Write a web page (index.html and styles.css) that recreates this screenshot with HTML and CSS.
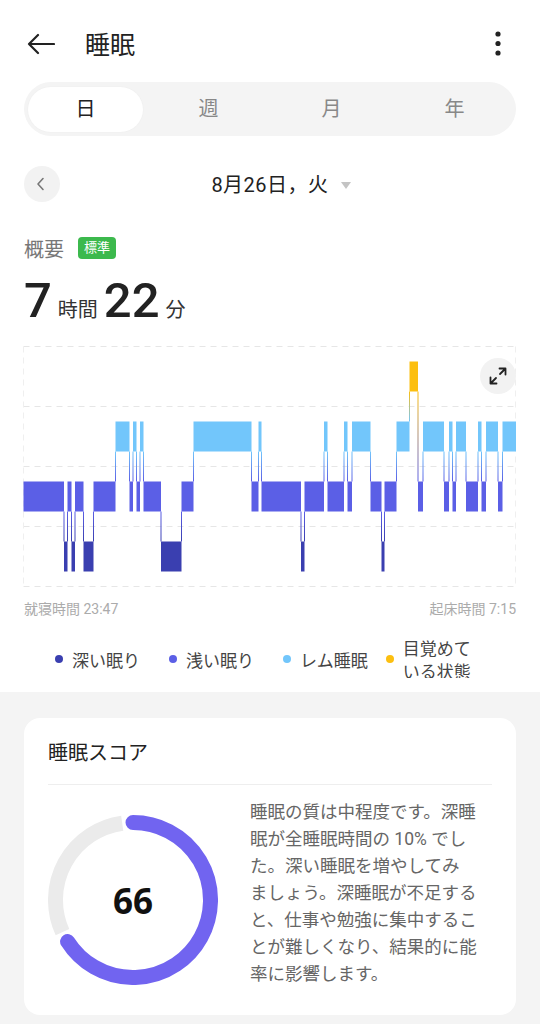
FILE: index.html
```html
<!DOCTYPE html>
<html lang="ja">
<head>
    <meta charset="UTF-8">
    <meta name="viewport" content="width=device-width, initial-scale=1.0">
    <title>睡眠</title>
    <link rel="stylesheet" href="styles.css">
</head>
<body>
    <header class="topbar">
        <svg class="back" width="28" height="24" viewBox="0 0 28 24">
            <path d="M2 12H27M2 12L11 3M2 12L11 21" fill="none" stroke="#222" stroke-width="2.2" stroke-linecap="round" stroke-linejoin="round"/>
        </svg>
        <h1>睡眠</h1>
        <svg class="more" width="6" height="26" viewBox="0 0 6 26">
            <circle cx="3" cy="3" r="2.6" fill="#222"/>
            <circle cx="3" cy="12.5" r="2.6" fill="#222"/>
            <circle cx="3" cy="22" r="2.6" fill="#222"/>
        </svg>
    </header>

    <nav class="tabs">
        <span class="tab active">日</span>
        <span class="tab">週</span>
        <span class="tab">月</span>
        <span class="tab">年</span>
    </nav>

    <section class="summary">
        <div class="date-row">
            <button class="prev" type="button">
                <svg width="10" height="14" viewBox="0 0 10 14">
                    <path d="M7 1.5L2 7l5 5.5" fill="none" stroke="#777" stroke-width="1.6" stroke-linecap="round" stroke-linejoin="round"/>
                </svg>
            </button>
            <span class="date">8月26日，火</span>
        </div>

        <div class="overview">
            <span class="overview-label">概要</span>
            <span class="badge">標準</span>
        </div>

        <div class="duration">
            <span class="num">7</span><span class="unit">時間</span><span class="num">22</span><span class="unit">分</span>
        </div>

        <div class="chart">
            <svg id="hypnogram" width="493" height="241" viewBox="23 345.5 493 241"></svg>
            <button class="expand" type="button">
                <svg width="36" height="36" viewBox="0 0 36 36">
                    <path d="M10.5 19.5v6h6M10.5 25.5l5.5-5.5M25.5 16.5v-6h-6M25.5 10.5L20 16" fill="none" stroke="#222" stroke-width="1.8" stroke-linecap="round" stroke-linejoin="round"/>
                </svg>
            </button>
        </div>

        <div class="times">
            <span>就寝時間 23:47</span>
            <span>起床時間 7:15</span>
        </div>

        <ul class="legend">
            <li><i class="dot deep"></i>深い眠り</li>
            <li><i class="dot light"></i>浅い眠り</li>
            <li><i class="dot rem"></i>レム睡眠</li>
            <li class="awake-item"><i class="dot awake"></i><span class="wrap">目覚めている状態</span></li>
        </ul>
    </section>

    <section class="score-section">
        <div class="card">
            <h2 class="card-title">睡眠スコア</h2>
            <div class="card-body">
                <div class="donut">
                    <svg width="170" height="170" viewBox="0 0 170 170">
                        <path d="M14.47 117.14A77.5 77.5 0 0 1 74.21 8.25" fill="none" stroke="#ebebeb" stroke-width="15"/>
                        <path d="M85 7.5A77.5 77.5 0 1 1 19.57 126.53" fill="none" stroke="#7164f0" stroke-width="15" stroke-linecap="round"/>
                    </svg>
                    <span class="score">66</span>
                </div>
                <p class="score-text">睡眠の質は中程度です。深睡<br>眠が全睡眠時間の 10% でし<br>た。深い睡眠を増やしてみ<br>ましょう。深睡眠が不足する<br>と、仕事や勉強に集中するこ<br>とが難しくなり、結果的に能<br>率に影響します。</p>
            </div>
        </div>
    </section>

    <script>
        // stage rows: 0 awake, 1 rem, 2 light, 3 deep
        var colors = ["#fcbf10", "#72c6fb", "#5b5fe6", "#3a3fb0"];
        var segments = [
            [2, 23.5, 64], [3, 64, 67.5], [2, 67.5, 71.5], [3, 71.5, 75], [2, 75, 83.5],
            [3, 83.5, 93.5], [2, 93.5, 115.5], [1, 115.5, 129.5], [2, 129.5, 133], [1, 133, 136.5],
            [2, 136.5, 140], [1, 140, 143.5], [2, 143.5, 161], [3, 161, 181.5], [2, 181.5, 193.5],
            [1, 193.5, 251.5], [2, 251.5, 258.5], [1, 258.5, 261.5], [2, 261.5, 301], [3, 301, 304.5],
            [2, 304.5, 324], [1, 324, 327.5], [2, 327.5, 344], [1, 344, 347.5], [2, 347.5, 352],
            [1, 352, 370.5], [2, 370.5, 381.5], [3, 381.5, 384.5], [2, 384.5, 396.5], [1, 396.5, 409.5],
            [0, 409.5, 418], [2, 418, 423], [1, 423, 444], [2, 444, 449], [1, 449, 452.5],
            [2, 452.5, 456], [1, 456, 466], [2, 466, 478], [1, 478, 481.5], [2, 481.5, 486],
            [1, 486, 498], [2, 498, 502.5], [1, 502.5, 516]
        ];

        var svg = document.getElementById("hypnogram");
        var ns = "http://www.w3.org/2000/svg";

        function add(parent, tag, attrs) {
            var el = document.createElementNS(ns, tag);
            for (var key in attrs) {
                el.setAttribute(key, attrs[key]);
            }
            parent.appendChild(el);
            return el;
        }

        function rowTop(stage) {
            return 361 + stage * 60;
        }

        // grid
        for (var i = 0; i < 5; i++) {
            add(svg, "line", { x1: 23.5, x2: 516, y1: 346 + i * 60, y2: 346 + i * 60, stroke: "#e6e6e6", "stroke-dasharray": "6 5" });
        }
        add(svg, "line", { x1: 23.5, x2: 23.5, y1: 346, y2: 586, stroke: "#efefef", "stroke-dasharray": "6 5" });
        add(svg, "line", { x1: 515.5, x2: 515.5, y1: 346, y2: 586, stroke: "#efefef", "stroke-dasharray": "6 5" });

        var defs = add(svg, "defs", {});
        var made = {};

        // connectors between stages
        for (var j = 1; j < segments.length; j++) {
            var a = Math.min(segments[j - 1][0], segments[j][0]);
            var b = Math.max(segments[j - 1][0], segments[j][0]);
            var id = "g" + a + b;
            if (!made[id]) {
                var grad = add(defs, "linearGradient", { id: id, x1: 0, y1: 0, x2: 0, y2: 1 });
                add(grad, "stop", { offset: 0, "stop-color": colors[a] });
                add(grad, "stop", { offset: 1, "stop-color": colors[b] });
                made[id] = true;
            }
            var y1 = rowTop(a) + 30;
            add(svg, "rect", { x: segments[j][1] - 0.5, y: y1, width: 1, height: rowTop(b) - y1, fill: "url(#" + id + ")" });
        }

        // bars
        segments.forEach(function(seg) {
            add(svg, "rect", { x: seg[1], y: rowTop(seg[0]), width: seg[2] - seg[1], height: 30, fill: colors[seg[0]] });
        });
    </script>
</body>
</html>
```

FILE: styles.css
```css
body {
    margin: 0;
    font-family: "Roboto", "Noto Sans CJK JP", sans-serif;
    color: #222;
    background-color: #fff;
}

button {
    border: none;
    padding: 0;
    cursor: pointer;
    font: inherit;
}

.topbar {
    display: flex;
    align-items: center;
    height: 72px;
    padding: 8px 39px 0 27px;
}

.topbar h1 {
    flex: 1;
    margin: 0 0 0 30px;
    font-size: 25px;
    font-weight: 400;
    line-height: 30px;
    padding-top: 3px;
}

.back,
.more {
    display: block;
}

.tabs {
    display: grid;
    grid-template-columns: repeat(4, 1fr);
    margin: 2px 24px 0;
    height: 54px;
    background-color: #f4f4f4;
    border-radius: 27px;
}

.tab {
    margin: 5px 4px 4px;
    border-radius: 23px;
    text-align: center;
    line-height: 45px;
    font-size: 20px;
    color: #888;
}

.tab.active {
    background-color: #fff;
    color: #222;
    box-shadow: 0 0 2px rgba(0, 0, 0, 0.04);
}

.summary {
    padding: 0 24px 12px 23px;
}

.date-row {
    display: grid;
    grid-template-columns: 36px 1fr 36px;
    align-items: center;
    height: 36px;
    margin-top: 30px;
    padding-left: 1px;
}

.prev {
    width: 36px;
    height: 36px;
    border-radius: 50%;
    background-color: #f2f2f2;
    display: flex;
    align-items: center;
    justify-content: center;
}

.prev svg {
    margin-left: -2px;
}

.date {
    justify-self: center;
    position: relative;
    font-size: 20px;
    letter-spacing: 0.5px;
    color: #222;
    line-height: 26px;
    padding-top: 1px;
}

.date::after {
    content: "";
    position: absolute;
    left: calc(100% + 12px);
    top: 11px;
    border-left: 5.5px solid transparent;
    border-right: 5.5px solid transparent;
    border-top: 7px solid #c4c4c4;
}

.overview {
    display: flex;
    align-items: center;
    margin-top: 34px;
    height: 24px;
    padding-left: 1px;
}

.overview-label {
    font-size: 20px;
    color: #777;
}

.badge {
    margin-left: 14px;
    padding: 0 6px;
    height: 22px;
    line-height: 22px;
    font-size: 13px;
    color: #fff;
    background-color: #3cb94d;
    border-radius: 4px;
}

.duration {
    margin-top: 16px;
    height: 49px;
    line-height: 49px;
    padding-left: 1px;
}

.num {
    font-size: 49px;
    font-weight: 500;
    color: #222;
}

.unit {
    font-size: 20px;
    color: #333;
    margin: 0 6px 0 6px;
}

.chart {
    position: relative;
    margin-top: 21px;
}

#hypnogram {
    display: block;
}

.expand {
    position: absolute;
    top: 12px;
    right: 0;
    width: 36px;
    height: 36px;
    border-radius: 50%;
    background-color: #f2f2f2;
}

.expand svg {
    display: block;
}

.times {
    display: flex;
    justify-content: space-between;
    margin-top: 12px;
    font-size: 14px;
    line-height: 20px;
    color: #ababab;
    padding-left: 1px;
}

.legend {
    list-style-type: none;
    display: flex;
    align-items: center;
    height: 38px;
    margin: 21px 0 0;
    padding: 0 0 0 32px;
    overflow: hidden;
    font-size: 17px;
    color: #444;
}

.legend li {
    display: flex;
    align-items: center;
}

.legend li + li {
    margin-left: 29px;
}

.legend li.awake-item {
    margin-left: 18px;
}

.dot {
    width: 8px;
    height: 8px;
    border-radius: 50%;
    margin-right: 9px;
}

.dot.deep {
    background-color: #3a3fb0;
}

.dot.light {
    background-color: #5b5fe6;
}

.dot.rem {
    background-color: #72c6fb;
}

.dot.awake {
    background-color: #fcbf10;
}

.wrap {
    width: 70px;
    padding-top: 4px;
    line-height: 23px;
}

.score-section {
    background-color: #f4f4f4;
    margin-top: 2px;
    padding: 26px 24px 9px;
}

.card {
    background-color: #fff;
    border-radius: 16px;
    padding: 0 24px;
}

.card-title {
    margin: 0;
    padding: 23px 0 19px;
    font-size: 20px;
    font-weight: 400;
    line-height: 24px;
    border-bottom: 1px solid #eeeeee;
}

.card-body {
    display: flex;
    align-items: flex-start;
    padding: 14px 0 27px;
}

.donut {
    position: relative;
    width: 170px;
    height: 170px;
    margin-top: 16px;
    flex-shrink: 0;
}

.donut svg {
    display: block;
}

.score {
    position: absolute;
    inset: 0;
    display: flex;
    align-items: center;
    justify-content: center;
    font-family: "Open Sans", sans-serif;
    font-size: 35px;
    font-weight: 700;
    color: #111;
}

.score-text {
    margin: 0 0 0 32px;
    font-size: 17.5px;
    line-height: 27px;
    color: #666;
    white-space: nowrap;
}
```
